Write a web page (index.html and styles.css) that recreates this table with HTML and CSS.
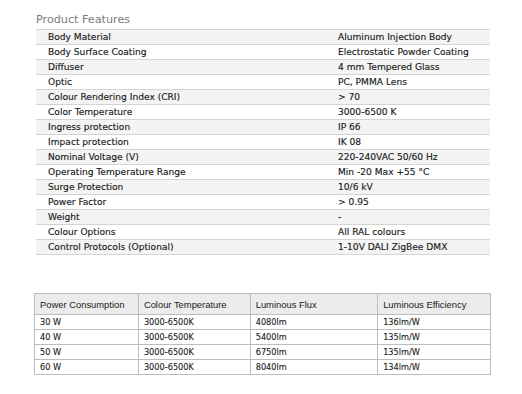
FILE: index.html
```html
<!DOCTYPE html>
<html>
<head>
<meta charset="utf-8">
<link rel="stylesheet" href="styles.css">
</head>
<body>
<div class="page">
  <h2 class="title">Product Features</h2>
  <table class="spec">
    <tr><td class="k">Body Material</td><td class="v">Aluminum Injection Body</td></tr>
    <tr><td class="k">Body Surface Coating</td><td class="v">Electrostatic Powder Coating</td></tr>
    <tr><td class="k">Diffuser</td><td class="v">4 mm Tempered Glass</td></tr>
    <tr><td class="k">Optic</td><td class="v">PC, PMMA Lens</td></tr>
    <tr><td class="k">Colour Rendering Index (CRI)</td><td class="v">&gt; 70</td></tr>
    <tr><td class="k">Color Temperature</td><td class="v">3000-6500 K</td></tr>
    <tr><td class="k">Ingress protection</td><td class="v">IP 66</td></tr>
    <tr><td class="k">Impact protection</td><td class="v">IK 08</td></tr>
    <tr><td class="k">Nominal Voltage (V)</td><td class="v">220-240VAC 50/60 Hz</td></tr>
    <tr><td class="k">Operating Temperature Range</td><td class="v">Min -20 Max +55 °C</td></tr>
    <tr><td class="k">Surge Protection</td><td class="v">10/6 kV</td></tr>
    <tr><td class="k">Power Factor</td><td class="v">&gt; 0.95</td></tr>
    <tr><td class="k">Weight</td><td class="v">-</td></tr>
    <tr><td class="k">Colour Options</td><td class="v">All RAL colours</td></tr>
    <tr><td class="k">Control Protocols (Optional)</td><td class="v">1-10V DALI ZigBee DMX</td></tr>
  </table>
  <table class="perf">
    <tr class="head"><th class="c1">Power Consumption</th><th class="c2">Colour Temperature</th><th class="c3">Luminous Flux</th><th class="c4">Luminous Efficiency</th></tr>
    <tr><td>30 W</td><td>3000-6500K</td><td>4080lm</td><td>136lm/W</td></tr>
    <tr><td>40 W</td><td>3000-6500K</td><td>5400lm</td><td>135lm/W</td></tr>
    <tr><td>50 W</td><td>3000-6500K</td><td>6750lm</td><td>135lm/W</td></tr>
    <tr><td>60 W</td><td>3000-6500K</td><td>8040lm</td><td>134lm/W</td></tr>
  </table>
</div>
</body>
</html>
```
FILE: styles.css
```css
html, body {
  margin: 0;
  padding: 0;
  background: #fff;
}
.page {
  padding: 10px 0 0 36px;
  font-family: "DejaVu Sans", sans-serif;
}
.title {
  margin: 0;
  font-weight: normal;
  font-size: 11.2px;
  line-height: 19px;
  color: #7a7a7a;
}
.spec {
  width: 454px;
  border-collapse: collapse;
  border-top: 1px solid #d4d4d4;
}
.spec td {
  height: 14px;
  padding: 0;
  border-bottom: 1px solid #d4d4d4;
  font-size: 9.1px;
  line-height: 14px;
  color: #1a1a1a;
  -webkit-text-stroke: 0.15px #1a1a1a;
  white-space: nowrap;
}
.spec tr:nth-child(odd) td {
  background: #f4f4f4;
}
.spec .k {
  padding-left: 12px;
  width: 290px;
}
.spec .v {
  padding-left: 0;
}
.perf {
  margin: 38px 0 0 -2px;
  border-collapse: collapse;
  width: 457px;
}
.perf th, .perf td {
  border: 1px solid #bdbdbd;
  padding: 0 0 0 5px;
  text-align: left;
  white-space: nowrap;
}
.perf th {
  background: #ececec;
  font-family: "Liberation Sans", Arial, sans-serif;
  font-weight: normal;
  font-size: 9.4px;
  height: 20px;
  color: #1a1a1a;
}
.perf td {
  height: 14px;
  font-size: 8.2px;
  line-height: 14px;
  color: #1a1a1a;
  -webkit-text-stroke: 0.1px #1a1a1a;
}
.perf .c1 { width: 98px; }
.perf .c2 { width: 106px; }
.perf .c3 { width: 122px; }
.perf .c4 { width: 107px; }
```
